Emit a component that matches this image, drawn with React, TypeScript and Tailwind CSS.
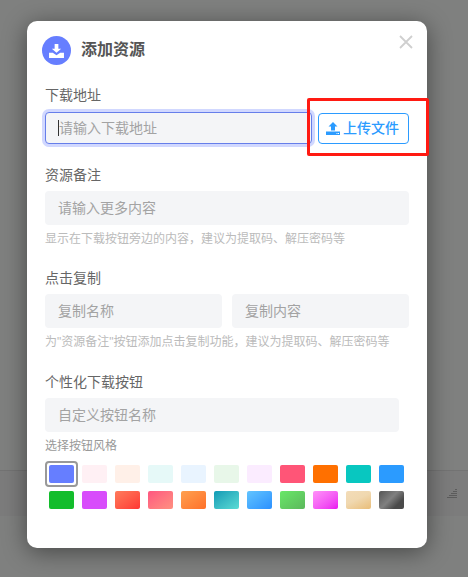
import React from 'react';

const font = {fontFamily: '"Liberation Sans", "Noto Sans CJK SC", sans-serif'};

const inputCls = 'h-[34px] rounded bg-[#f4f5f7] pl-[13px] text-[14px] text-[#333] outline-none placeholder:text-[#a3a3a3]';

const swatches = [
    'bg-[#667eff]', 'bg-[#fff0f4]', 'bg-[#fff0e8]', 'bg-[#e6f9f8]', 'bg-[#e9f4ff]', 'bg-[#e8f7e9]', 'bg-[#fbecff]',
    'bg-[#ff5577]', 'bg-[#ff7000]', 'bg-[#08c7c0]', 'bg-[#2b9bff]',
    'bg-[#13bd2c]', 'bg-[#d84cfb]',
    'bg-gradient-to-br from-[#ff7a5c] to-[#ff3333]',
    'bg-gradient-to-br from-[#ff5580] to-[#ff9080]',
    'bg-gradient-to-br from-[#ffa04f] to-[#ff7028]',
    'bg-gradient-to-br from-[#0b9bb5] to-[#5adcd4]',
    'bg-gradient-to-br from-[#62c4ff] to-[#2b90ff]',
    'bg-gradient-to-br from-[#68e868] to-[#5cb85c]',
    'bg-gradient-to-br from-[#ff90f8] to-[#ea00f0]',
    'bg-[linear-gradient(155deg,#f3dcb8_0%,#f0d8b0_45%,#e9bd78_100%)]',
    'bg-[linear-gradient(135deg,#555_0%,#808080_45%,#4a4a4a_75%)]',
];

const Field: React.FC<{label: string; children: React.ReactNode; hint?: string; first?: boolean}> = ({label, children, hint, first}) => (
    <div>
        <div className={`mb-[7px] h-[20px] text-[14px] text-[#666] ${first ? 'leading-[21px]' : 'leading-[23px]'}`}>{label}</div>
        {children}
        {hint && <div className="mt-[5px] h-[17px] whitespace-nowrap text-[12px] leading-[19px] text-[#bbb]">{hint}</div>}
    </div>
);

export default function App() {
    return (
        <div className="relative h-[577px] w-[468px] overflow-hidden bg-[#7f807f]" style={font}>
            {/* page behind the mask */}
            <div className="pt-[470px]">
                <div className="flex h-[46px] items-center justify-end border-t border-[#737373] bg-[#7c7c7c] pr-[10px]">
                    <svg width="11" height="10" viewBox="0 0 11 10" fill="#5c5c5c">
                        <rect x="8" y="0" width="2" height="1"/>
                        <rect x="6" y="2" width="4" height="1"/>
                        <rect x="4" y="4" width="6" height="1"/>
                        <rect x="2" y="6" width="8" height="1"/>
                        <rect x="0" y="8" width="10" height="1"/>
                    </svg>
                </div>
            </div>

            <div className="absolute inset-0 pl-[27px] pt-[21px]">
                <div className="relative h-[527px] w-[400px] rounded-[10px] bg-white pl-[18px] pt-[15px] shadow-[0_4px_24px_rgba(0,0,0,0.45)]">
                    <svg className="absolute right-[14px] top-[14px]" width="14" height="14" viewBox="0 0 14 14" fill="none" stroke="#cfcfcf" strokeWidth="1.8">
                        <path d="M1 1l12 12M13 1L1 13"/>
                    </svg>

                    <div className="-ml-[3px] flex h-[29px] items-center gap-[10px]">
                        <div className="flex h-[29px] w-[29px] items-center justify-center rounded-full bg-[#667eff]">
                            <svg width="15" height="14" viewBox="0 0 16 15" fill="white">
                                <path d="M6 0h4v5h3L8 9.500 3 5h3z"/>
                                <path d="M0 9.500h4l4 2.500 4-2.500h4V15H0z"/>
                            </svg>
                        </div>
                        <div className="-mt-[1px] text-[16px] font-semibold leading-[24px] text-[#555]">添加资源</div>
                    </div>

                    <div className="mt-[20px] flex w-[364px] flex-col gap-[20px]">
                        <Field label="下载地址" first>
                            <div className="relative flex items-center justify-between">
                                <input
                                    className={`${inputCls} !h-[32px] w-[267px] border border-[#667eea] shadow-[0_0_0_3px_rgba(102,126,255,0.3)]`}
                                    placeholder="请输入下载地址"
                                />
                                <span className="absolute left-[13px] top-[8px] h-[16px] w-px bg-[#333]"/>
                                <button className="flex h-[31px] w-[91px] items-center justify-center gap-[3px] rounded border border-[#2b9bff] pr-[2px] text-[14px] font-medium text-[#2b9bff]">
                                    <svg width="14" height="13" viewBox="0 0 14 13" fill="#2b9bff">
                                        <path d="M7 0l4.500 4.500H9V8.500H5V4.500H2.500z"/>
                                        <path d="M0 9.500h14V13H0z"/>
                                        <path d="M10.500 11h1v1h-1zM12 11h1v1h-1z" fill="white"/>
                                    </svg>
                                    上传文件
                                </button>
                            </div>
                        </Field>

                        <Field label="资源备注" hint="显示在下载按钮旁边的内容，建议为提取码、解压密码等">
                            <input className={`${inputCls} w-full`} placeholder="请输入更多内容"/>
                        </Field>

                        <Field label="点击复制" hint={'为"资源备注"按钮添加点击复制功能，建议为提取码、解压密码等'}>
                            <div className="flex gap-[10px]">
                                <input className={`${inputCls} w-[177px]`} placeholder="复制名称"/>
                                <input className={`${inputCls} w-[177px]`} placeholder="复制内容"/>
                            </div>
                        </Field>

                        <div className="mt-[1px]">
                            <Field label="个性化下载按钮">
                                <input className={`${inputCls} w-[354px]`} placeholder="自定义按钮名称"/>
                            </Field>
                            <div className="mt-[4px] h-[17px] text-[12px] leading-[21px] text-[#999]">选择按钮风格</div>
                            <div className="ml-[4px] mt-[12px] grid grid-cols-[repeat(11,25px)] gap-x-[8px] gap-y-[8px]">
                                {swatches.map((c, i) => (
                                    <div key={i} className={`relative h-[18px] w-[25px] rounded-[2px] ${c}`}>
                                        {i === 0 && <span className="absolute -inset-x-[4px] -inset-y-[4px] rounded-[4px] border-2 border-[#999]"/>}
                                    </div>
                                ))}
                            </div>
                        </div>
                    </div>
                </div>
            </div>

            {/* red annotation box */}
            <div className="absolute left-[307px] top-[98px] h-[58px] w-[122px] rounded-[2px] border-[3px] border-[#ff1a12]"/>
        </div>
    );
}
